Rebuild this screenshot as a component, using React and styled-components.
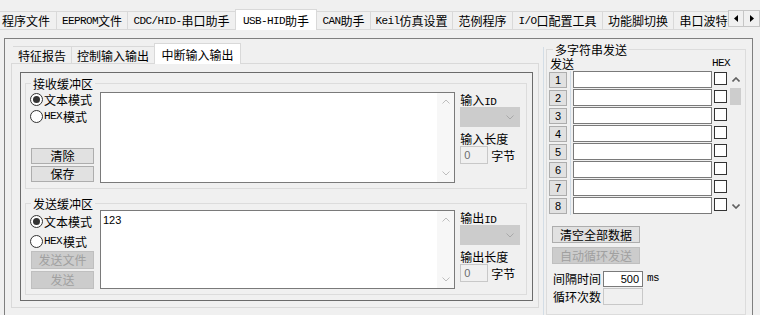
import React from 'react';
import styled, { createGlobalStyle } from 'styled-components';

const GlobalStyle = createGlobalStyle`
  html, body { margin: 0; padding: 0; background: #f0f0f0; }
  body {
    font-family: "Noto Sans CJK SC", "Noto Sans", sans-serif;
    font-size: 12px;
    color: #000;
  }
  *, *::before, *::after { box-sizing: border-box; }
`;

// latin runs in the bitmap-like half width face
const Lat = styled.span`
  font-family: "Liberation Mono", monospace;
  font-size: 11px;
  letter-spacing: -0.6px;
`;

const Window = styled.div`
  width: 760px;
  height: 315px;
  overflow: hidden;
  background: #f0f0f0;
`;

/* ---------- top tab bar ---------- */
const TopBar = styled.div`
  display: flex;
  padding-top: 9px;
`;

const TopStrip = styled.div`
  display: flex;
  align-items: flex-end;
  width: 728px;
  height: 21px;
  overflow: hidden;
  box-shadow: inset 0 -1px 0 #d9d9d9;
`;

const Tab = styled.div`
  flex: none;
  display: flex;
  align-items: center;
  justify-content: ${(p) => (p.$start ? 'flex-start' : 'center')};
  padding-left: ${(p) => (p.$start ? '2px' : '0')};
  width: ${(p) => p.$w}px;
  height: ${(p) => (p.$active ? p.$ah : p.$ih)}px;
  line-height: 14px;
  white-space: nowrap;
  background: ${(p) => (p.$active ? '#fff' : 'transparent')};
  border-top: 1px solid #d9d9d9;
  border-right: 1px solid #d9d9d9;
  border-left: ${(p) => (p.$active ? '1px solid #d9d9d9' : 'none')};
  margin-left: ${(p) => (p.$active ? '-1px' : '0')};
  padding-top: ${(p) => (p.$active ? '1px' : '0')};
`;

const Arrows = styled.div`
  display: flex;
  margin-top: 1px;
  align-self: flex-start;
`;

const ArrowBtn = styled.div`
  width: 16px;
  height: 17px;
  display: flex;
  align-items: center;
  justify-content: center;
  background: #f0f0f0;
  border: 1px solid #c6c6c6;
  & + & { border-left: none; }
`;

/* ---------- main panel ---------- */
const Page = styled.div`
  padding: 8px 0 0 4px;
`;

const Panel = styled.div`
  display: flex;
  width: 749px;
  height: 280px;
  border: 1px solid #7f7f7f;
`;

const LeftSection = styled.div`
  margin: 4px 0 0 6px;
  width: 528px;
`;

const InnerStrip = styled.div`
  display: flex;
  align-items: flex-end;
  height: 21px;
  padding-left: 2px;
  box-shadow: inset 0 -1px 0 #d9d9d9;
`;

const TabPage = styled.div`
  height: 244px;
  border: 1px solid #d9d9d9;
  border-top: none;
  padding: 8px 0 0 8px;
`;

const DarkBox = styled.div`
  width: 513px;
  height: 229px;
  border: 1px solid #6b6b6b;
  padding-left: 4px;
`;

const Group = styled.fieldset`
  margin: ${(p) => p.$mt}px 0 0 0;
  padding: 0 4px 5px ${(p) => p.$pl ?? 5}px;
  width: ${(p) => p.$w}px;
  height: ${(p) => (p.$h ? `${p.$h}px` : 'auto')};
  min-width: 0;
  border: 1px solid #dcdcdc;
`;

const Legend = styled.legend`
  padding: 0 2px;
  margin-left: ${(p) => p.$ml ?? 0}px;
  height: 13px;
  line-height: 13px;
  font-size: 12px;
`;

const ContentRow = styled.div`
  display: flex;
  align-items: flex-start;
  margin-top: ${(p) => p.$mt}px;
`;

const LeftCol = styled.div`
  display: flex;
  flex-direction: column;
  justify-content: space-between;
  width: 63px;
  height: ${(p) => p.$h}px;
`;

const RadioGroup = styled.div`
  display: flex;
  flex-direction: column;
  gap: ${(p) => p.$gap}px;
  padding-top: ${(p) => p.$pt}px;
`;

const RadioRow = styled.label`
  display: flex;
  align-items: center;
  gap: 1px;
  height: 15px;
  line-height: 15px;
  margin-left: -1px;
  white-space: nowrap;
`;

const RadioDot = styled.span`
  flex: none;
  width: 13px;
  height: 13px;
  border-radius: 50%;
  border: 1px solid #333;
  background: #fff;
  display: flex;
  align-items: center;
  justify-content: center;
  &::after {
    content: '';
    width: 7px;
    height: 7px;
    border-radius: 50%;
    background: ${(p) => (p.$on ? '#333' : 'transparent')};
  }
`;

const BtnStack = styled.div`
  display: flex;
  flex-direction: column;
  gap: 2px;
  padding-bottom: ${(p) => p.$pb}px;
`;

const Button = styled.div`
  width: ${(p) => p.$w}px;
  height: ${(p) => p.$h}px;
  display: flex;
  align-items: center;
  justify-content: center;
  margin-left: ${(p) => p.$ml ?? 0}px;
  margin-top: ${(p) => p.$mt ?? 0}px;
  background: ${(p) => (p.$off ? '#cccccc' : '#e1e1e1')};
  border: 1px solid ${(p) => (p.$off ? '#bfbfbf' : '#adadad')};
  color: ${(p) => (p.$off ? '#a0a0a0' : '#000')};
  line-height: 14px;
  white-space: nowrap;
`;

const TextBox = styled.div`
  display: flex;
  width: 356px;
  height: ${(p) => p.$h}px;
  margin-left: 6px;
  border: 1px solid #7a7a7a;
  background: #fff;
`;

const TextArea = styled.div`
  flex: 1;
  padding: 3px 2px;
  font-family: "Liberation Sans", sans-serif;
  font-size: 11px;
  line-height: 13px;
`;

const VScroll = styled.div`
  width: 17px;
  display: flex;
  flex-direction: column;
  justify-content: space-between;
  background: #f7f7f7;
`;

const ScrollArrow = styled.div`
  height: 17px;
  display: flex;
  align-items: center;
  justify-content: center;
`;

const RightCol = styled.div`
  display: flex;
  flex-direction: column;
  width: 62px;
  margin-left: 5px;
`;

const Caption = styled.div`
  height: 15px;
  line-height: 15px;
  margin-top: ${(p) => p.$mt ?? 0}px;
  white-space: nowrap;
`;

const Combo = styled.div`
  width: 60px;
  height: 20px;
  background: #cccccc;
  border: 1px solid #cccccc;
  display: flex;
  align-items: center;
  justify-content: flex-end;
  padding-right: 5px;
`;

const LenRow = styled.div`
  display: flex;
  align-items: center;
  gap: 3px;
  height: 18px;
`;

const NumField = styled.div`
  width: ${(p) => p.$w}px;
  height: ${(p) => p.$h}px;
  border: 1px solid ${(p) => (p.$off ? '#c8c8c8' : '#7a7a7a')};
  background: ${(p) => (p.$off ? '#f0f0f0' : '#fff')};
  color: ${(p) => (p.$off ? '#6d6d6d' : '#000')};
  font-family: "Liberation Sans", sans-serif;
  font-size: 11px;
  line-height: ${(p) => p.$h - 2}px;
  text-align: ${(p) => (p.$right ? 'right' : 'left')};
  padding: 0 3px;
`;

/* ---------- right multi string group ---------- */
const RightSection = styled.div`
  display: flex;
  margin-left: 4px;
`;

const Splitter = styled.div`
  width: 1px;
  margin-top: 8px;
  background: #d3dde6;
`;

const RowsArea = styled.div`
  display: flex;
  align-items: flex-start;
`;

const RowsList = styled.div`
  display: flex;
  flex-direction: column;
  width: 178px;
`;

const HeaderRow = styled.div`
  display: flex;
  justify-content: space-between;
  height: 15px;
  line-height: 15px;
  padding-left: 1px;
  margin-right: -3px;
`;

const StrRow = styled.div`
  display: flex;
  align-items: flex-start;
  height: 18px;
`;

const IdxBtn = styled.div`
  width: 18px;
  height: 16px;
  margin-top: 1px;
  background: #e1e1e1;
  border: 1px solid #adadad;
  display: flex;
  align-items: center;
  justify-content: center;
  font-family: "Liberation Sans", sans-serif;
  font-size: 11px;
`;

const RowDivider = styled.div`
  width: 1px;
  align-self: stretch;
  margin-left: 3px;
  background: #cfdbe6;
`;

const StrInput = styled.div`
  width: 139px;
  height: 17px;
  margin-left: 2px;
  border: 1px solid #7a7a7a;
  background: #fff;
`;

const CheckBox = styled.div`
  width: 13px;
  height: 13px;
  margin: 1px 0 0 2px;
  border: 1px solid #333;
  background: #fff;
`;

const ListScroll = styled.div`
  width: 13px;
  height: 144px;
  margin: 15px 0 0 3px;
  display: flex;
  flex-direction: column;
`;

const Thumb = styled.div`
  height: 17px;
  background: #cdcdcd;
`;

const Spacer = styled.div`
  flex: 1;
`;

const FieldRow = styled.div`
  display: flex;
  align-items: center;
  gap: 2px;
  height: ${(p) => p.$h}px;
  margin: ${(p) => p.$mt}px 0 0 4px;
  line-height: 15px;
`;

const Unit = styled(Lat)`
  margin-left: 2px;
`;

const Chevron = ({ up, color = '#bdbdbd', w = 8, h = 5, sw = 1 }) => (
  <svg width={w} height={h} viewBox="0 0 8 5">
    <polyline
      points={up ? '0.5,4.5 4,1 7.5,4.5' : '0.5,0.5 4,4 7.5,0.5'}
      fill="none"
      stroke={color}
      strokeWidth={sw}
    />
  </svg>
);

const Tri = ({ left }) => (
  <svg width="4" height="7" viewBox="0 0 4 7">
    <polygon points={left ? '4,0 0,3.5 4,7' : '0,0 4,3.5 0,7'} fill="#000" />
  </svg>
);

const topTabs = [
  { w: 57, label: '程序文件', start: true },
  { w: 71, label: <><Lat>EEPROM</Lat>文件</> },
  { w: 108, label: <><Lat>CDC/HID-</Lat>串口助手</> },
  { w: 82, label: <><Lat>USB-HID</Lat>助手</>, active: true },
  { w: 54, label: <><Lat>CAN</Lat>助手</> },
  { w: 82, label: <><Lat>Keil</Lat>仿真设置</> },
  { w: 60, label: '范例程序' },
  { w: 90, label: <><Lat>I/O</Lat>口配置工具</> },
  { w: 71, label: '功能脚切换' },
  { w: 72, label: '串口波特率' },
];

const innerTabs = [
  { w: 59, label: '特征报告' },
  { w: 83, label: '控制输入输出' },
  { w: 87, label: '中断输入输出', active: true },
];

function BufferGroup({ title, mt, rowMt, h, radioPt, radioGap, btns, btnH, btnPb, text, idLabel, lenLabel }) {
  return (
    <Group $mt={mt} $w={502}>
      <Legend>{title}</Legend>
      <ContentRow $mt={rowMt}>
        <LeftCol $h={h}>
          <RadioGroup $pt={radioPt} $gap={radioGap}>
            <RadioRow><RadioDot $on />文本模式</RadioRow>
            <RadioRow><RadioDot /><Lat>HEX</Lat>模式</RadioRow>
          </RadioGroup>
          <BtnStack $pb={btnPb}>
            {btns.map((b) => (
              <Button key={b.label} $w={63} $h={btnH} $off={b.off}>{b.label}</Button>
            ))}
          </BtnStack>
        </LeftCol>
        <TextBox $h={h}>
          <TextArea>{text}</TextArea>
          <VScroll>
            <ScrollArrow><Chevron up /></ScrollArrow>
            <ScrollArrow><Chevron /></ScrollArrow>
          </VScroll>
        </TextBox>
        <RightCol>
          <Caption>{idLabel}<Lat>ID</Lat></Caption>
          <Combo><Chevron color="#a9a9a9" /></Combo>
          <Caption $mt={4}>{lenLabel}</Caption>
          <LenRow>
            <NumField $w={28} $h={18} $off>0</NumField>
            字节
          </LenRow>
        </RightCol>
      </ContentRow>
    </Group>
  );
}

export default function App() {
  return (
    <Window>
      <GlobalStyle />
      <TopBar>
        <TopStrip>
          {topTabs.map((t, i) => (
            <Tab key={i} $w={t.w} $ah={21} $ih={19} $active={t.active} $start={t.start}>
              {t.label}
            </Tab>
          ))}
        </TopStrip>
        <Arrows>
          <ArrowBtn><Tri left /></ArrowBtn>
          <ArrowBtn><Tri /></ArrowBtn>
        </Arrows>
      </TopBar>

      <Page>
        <Panel>
          <LeftSection>
            <InnerStrip>
              {innerTabs.map((t, i) => (
                <Tab key={i} $w={t.w} $ah={21} $ih={18} $active={t.active}>
                  {t.label}
                </Tab>
              ))}
            </InnerStrip>
            <TabPage>
              <DarkBox>
                <BufferGroup
                  title="接收缓冲区"
                  mt={4}
                  rowMt={2}
                  h={91}
                  radioPt={0}
                  radioGap={2}
                  btns={[{ label: '清除' }, { label: '保存' }]}
                  btnH={16}
                  btnPb={1}
                  text=""
                  idLabel="输入"
                  lenLabel="输入长度"
                />
                <BufferGroup
                  title="发送缓冲区"
                  mt={8}
                  rowMt={0}
                  h={79}
                  radioPt={4}
                  radioGap={5}
                  btns={[{ label: '发送文件', off: true }, { label: '发送', off: true }]}
                  btnH={18}
                  btnPb={0}
                  text="123"
                  idLabel="输出"
                  lenLabel="输出长度"
                />
              </DarkBox>
            </TabPage>
          </LeftSection>

          <RightSection>
            <Splitter />
            <Group $mt={4} $w={200} $h={272} $pl={2} style={{ marginLeft: 2 }}>
              <Legend $ml={4}>多字符串发送</Legend>
              <RowsArea>
                <RowsList>
                  <HeaderRow>
                    <span>发送</span>
                    <Lat>HEX</Lat>
                  </HeaderRow>
                  {[1, 2, 3, 4, 5, 6, 7, 8].map((n) => (
                    <StrRow key={n}>
                      <IdxBtn>{n}</IdxBtn>
                      <RowDivider />
                      <StrInput />
                      <CheckBox />
                    </StrRow>
                  ))}
                </RowsList>
                <ListScroll>
                  <ScrollArrow><Chevron up color="#606060" w={8} h={5} sw={1.6} /></ScrollArrow>
                  <Thumb />
                  <Spacer />
                  <ScrollArrow><Chevron color="#606060" w={8} h={5} sw={1.6} /></ScrollArrow>
                </ListScroll>
              </RowsArea>
              <Button $w={88} $h={17} $ml={3} $mt={11}>清空全部数据</Button>
              <Button $w={88} $h={17} $ml={3} $mt={4} $off>自动循环发送</Button>
              <FieldRow $h={17} $mt={6}>
                间隔时间
                <NumField $w={40} $h={16} $right>500</NumField>
                <Unit>ms</Unit>
              </FieldRow>
              <FieldRow $h={17} $mt={1}>
                循环次数
                <NumField $w={40} $h={17} $off />
              </FieldRow>
            </Group>
          </RightSection>
        </Panel>
      </Page>
    </Window>
  );
}
